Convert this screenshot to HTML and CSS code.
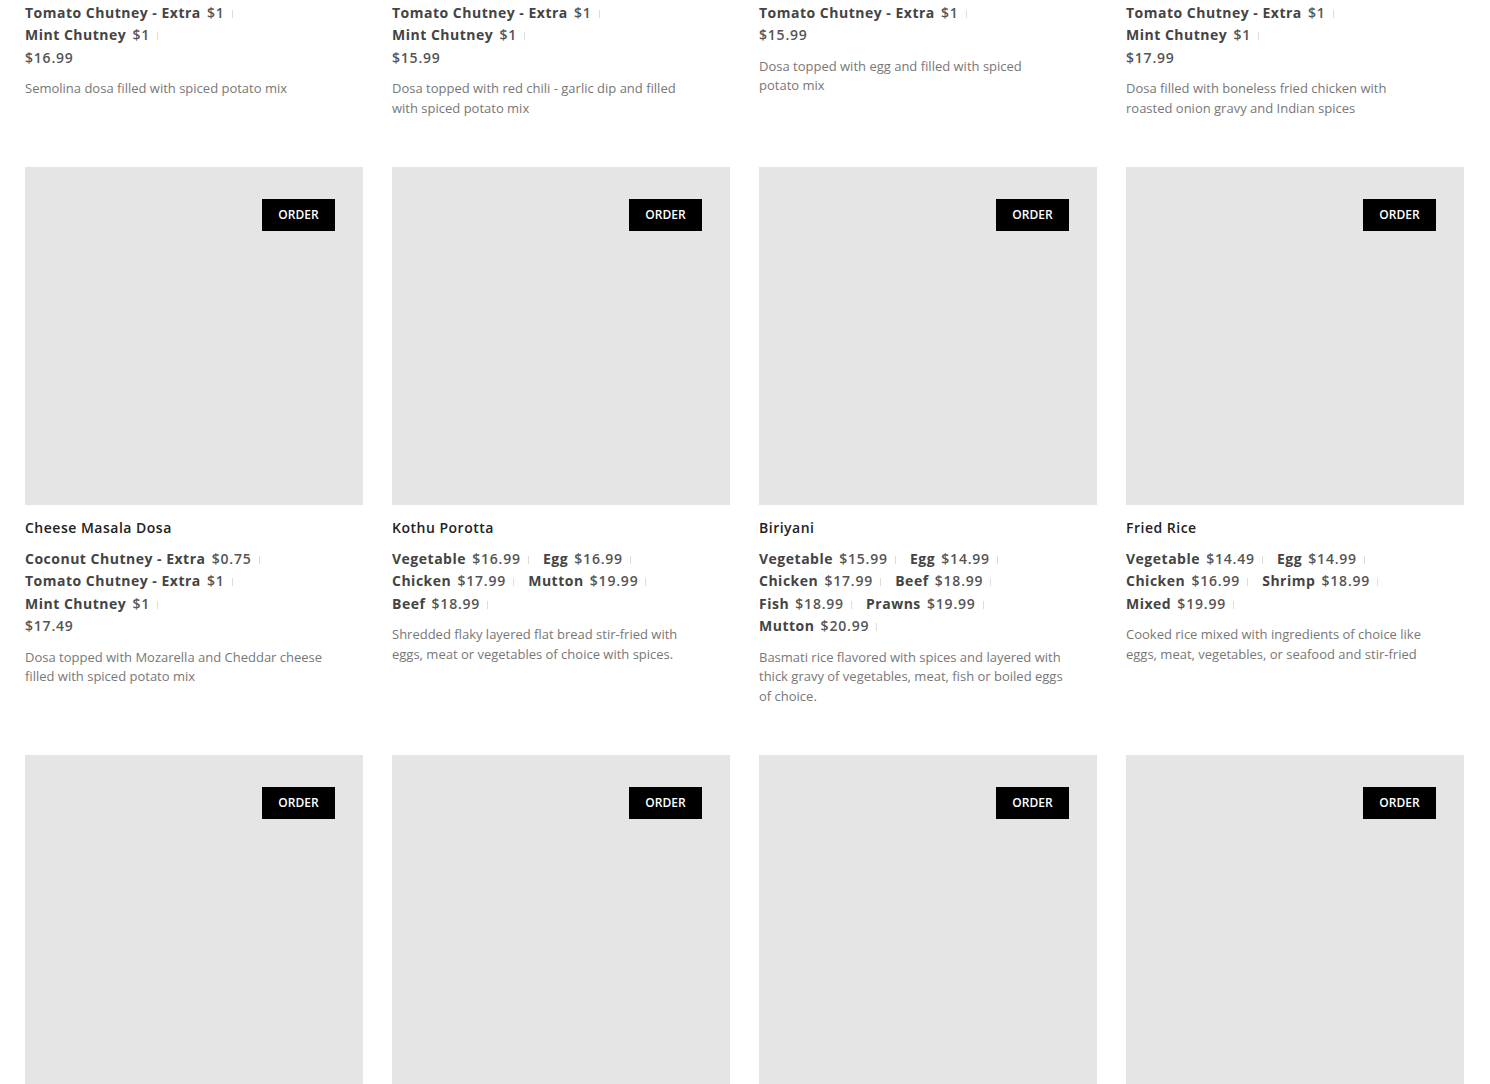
FILE: index.html
```html
<!DOCTYPE html>
<html lang="en">
<head>
<meta charset="utf-8">
<title>Menu</title>
<link rel="stylesheet" href="styles.css">
</head>
<body>
<main class="menu">
  <div class="grid">
    <article class="card">
      <div class="photo"><button class="order">ORDER</button></div>
      <h3 class="title">Rava Masala Dosa</h3>
      <div class="info">
        <div class="opts">
          <span class="opt"><b>Coconut Chutney - Extra</b> <span class="p">$0.75</span><i class="sep"></i></span>
          <span class="opt"><b>Tomato Chutney - Extra</b> <span class="p">$1</span><i class="sep"></i></span>
          <span class="opt"><b>Mint Chutney</b> <span class="p">$1</span><i class="sep"></i></span>
        </div>
        <div class="price">$16.99</div>
        <p class="desc">Semolina dosa filled with spiced potato mix</p>
      </div>
    </article>
    <article class="card">
      <div class="photo"><button class="order">ORDER</button></div>
      <h3 class="title">Mysore Masala Dosa</h3>
      <div class="info">
        <div class="opts">
          <span class="opt"><b>Coconut Chutney - Extra</b> <span class="p">$0.75</span><i class="sep"></i></span>
          <span class="opt"><b>Tomato Chutney - Extra</b> <span class="p">$1</span><i class="sep"></i></span>
          <span class="opt"><b>Mint Chutney</b> <span class="p">$1</span><i class="sep"></i></span>
        </div>
        <div class="price">$15.99</div>
        <p class="desc">Dosa topped with red chili - garlic dip and filled with spiced potato mix</p>
      </div>
    </article>
    <article class="card">
      <div class="photo"><button class="order">ORDER</button></div>
      <h3 class="title">Egg Masala Dosa</h3>
      <div class="info">
        <div class="opts">
          <span class="opt"><b>Coconut Chutney - Extra</b> <span class="p">$0.75</span><i class="sep"></i></span>
          <span class="opt"><b>Tomato Chutney - Extra</b> <span class="p">$1</span><i class="sep"></i></span>
        </div>
        <div class="price">$15.99</div>
        <p class="desc">Dosa topped with egg and filled with spiced potato mix</p>
      </div>
    </article>
    <article class="card">
      <div class="photo"><button class="order">ORDER</button></div>
      <h3 class="title">Chicken Masala Dosa</h3>
      <div class="info">
        <div class="opts">
          <span class="opt"><b>Coconut Chutney - Extra</b> <span class="p">$0.75</span><i class="sep"></i></span>
          <span class="opt"><b>Tomato Chutney - Extra</b> <span class="p">$1</span><i class="sep"></i></span>
          <span class="opt"><b>Mint Chutney</b> <span class="p">$1</span><i class="sep"></i></span>
        </div>
        <div class="price">$17.99</div>
        <p class="desc">Dosa filled with boneless fried chicken with roasted onion gravy and Indian spices</p>
      </div>
    </article>

    <article class="card">
      <div class="photo"><button class="order">ORDER</button></div>
      <h3 class="title">Cheese Masala Dosa</h3>
      <div class="info">
        <div class="opts">
          <span class="opt"><b>Coconut Chutney - Extra</b> <span class="p">$0.75</span><i class="sep"></i></span>
          <span class="opt"><b>Tomato Chutney - Extra</b> <span class="p">$1</span><i class="sep"></i></span>
          <span class="opt"><b>Mint Chutney</b> <span class="p">$1</span><i class="sep"></i></span>
        </div>
        <div class="price">$17.49</div>
        <p class="desc">Dosa topped with Mozarella and Cheddar cheese filled with spiced potato mix</p>
      </div>
    </article>
    <article class="card">
      <div class="photo"><button class="order">ORDER</button></div>
      <h3 class="title">Kothu Porotta</h3>
      <div class="info">
        <div class="opts">
          <span class="opt"><b>Vegetable</b> <span class="p">$16.99</span><i class="sep"></i></span>
          <span class="opt"><b>Egg</b> <span class="p">$16.99</span><i class="sep"></i></span>
          <span class="opt"><b>Chicken</b> <span class="p">$17.99</span><i class="sep"></i></span>
          <span class="opt"><b>Mutton</b> <span class="p">$19.99</span><i class="sep"></i></span>
          <span class="opt"><b>Beef</b> <span class="p">$18.99</span><i class="sep"></i></span>
        </div>
        <p class="desc">Shredded flaky layered flat bread stir-fried with eggs, meat or vegetables of choice with spices.</p>
      </div>
    </article>
    <article class="card">
      <div class="photo"><button class="order">ORDER</button></div>
      <h3 class="title">Biriyani</h3>
      <div class="info">
        <div class="opts">
          <span class="opt"><b>Vegetable</b> <span class="p">$15.99</span><i class="sep"></i></span>
          <span class="opt"><b>Egg</b> <span class="p">$14.99</span><i class="sep"></i></span>
          <span class="opt"><b>Chicken</b> <span class="p">$17.99</span><i class="sep"></i></span>
          <span class="opt"><b>Beef</b> <span class="p">$18.99</span><i class="sep"></i></span>
          <span class="opt"><b>Fish</b> <span class="p">$18.99</span><i class="sep"></i></span>
          <span class="opt"><b>Prawns</b> <span class="p">$19.99</span><i class="sep"></i></span>
          <span class="opt"><b>Mutton</b> <span class="p">$20.99</span><i class="sep"></i></span>
        </div>
        <p class="desc">Basmati rice flavored with spices and layered with thick gravy of vegetables, meat, fish or boiled eggs of choice.</p>
      </div>
    </article>
    <article class="card">
      <div class="photo"><button class="order">ORDER</button></div>
      <h3 class="title">Fried Rice</h3>
      <div class="info">
        <div class="opts">
          <span class="opt"><b>Vegetable</b> <span class="p">$14.49</span><i class="sep"></i></span>
          <span class="opt"><b>Egg</b> <span class="p">$14.99</span><i class="sep"></i></span>
          <span class="opt"><b>Chicken</b> <span class="p">$16.99</span><i class="sep"></i></span>
          <span class="opt"><b>Shrimp</b> <span class="p">$18.99</span><i class="sep"></i></span>
          <span class="opt"><b>Mixed</b> <span class="p">$19.99</span><i class="sep"></i></span>
        </div>
        <p class="desc">Cooked rice mixed with ingredients of choice like eggs, meat, vegetables, or seafood and stir-fried</p>
      </div>
    </article>

    <article class="card">
      <div class="photo"><button class="order">ORDER</button></div>
      <h3 class="title">Chicken Curry</h3>
    </article>
    <article class="card">
      <div class="photo"><button class="order">ORDER</button></div>
      <h3 class="title">Mutton Curry</h3>
    </article>
    <article class="card">
      <div class="photo"><button class="order">ORDER</button></div>
      <h3 class="title">Fish Curry</h3>
    </article>
    <article class="card">
      <div class="photo"><button class="order">ORDER</button></div>
      <h3 class="title">Vegetable Curry</h3>
    </article>
  </div>
</main>
</body>
</html>
```

FILE: styles.css
```css
html, body {
  margin: 0;
  padding: 0;
  background: #fff;
  overflow: hidden;
}
body {
  font-family: "Open Sans", "Noto Sans", sans-serif;
  color: #444;
}
.menu {
  padding: 0 26px 0 25px;
}
.grid {
  display: grid;
  grid-template-columns: repeat(4, 338px);
  column-gap: 29px;
  row-gap: 48.5px;
  align-items: start;
  margin-top: -402px;
}
.card {
  display: flex;
  flex-direction: column;
}
.photo {
  position: relative;
  width: 338px;
  height: 338px;
  background: #e5e5e5;
}
.order {
  position: absolute;
  top: 32px;
  right: 28px;
  width: 73px;
  height: 32px;
  border: 0;
  background: #000;
  color: #fff;
  font-family: "Open Sans", sans-serif;
  font-size: 12px;
  font-weight: 600;
  padding: 0 0 1px;
  cursor: pointer;
}
.title {
  margin: 12px 0 0;
  font-size: 14px;
  line-height: 22px;
  font-weight: 600;
  letter-spacing: 0.5px;
  color: #222;
}
.info {
  max-width: 304px;
}
.opts {
  margin-top: 9px;
  font-size: 14px;
  line-height: 22.5px;
  letter-spacing: 0.5px;
}
.opt {
  display: inline-block;
  white-space: nowrap;
  margin-right: 10px;
}
.opt b {
  font-weight: 700;
  color: #444;
}
.p {
  font-weight: 600;
  color: #555;
  margin-left: 2px;
  letter-spacing: 0.8px;
}
.sep {
  display: inline-block;
  width: 1px;
  height: 8px;
  margin-left: 7px;
  background: #ddd;
  vertical-align: 0px;
}
.price {
  font-size: 14px;
  line-height: 22.5px;
  letter-spacing: 0.8px;
  font-weight: 600;
  color: #555;
}
.desc {
  margin: 10px 0 0;
  font-size: 13px;
  line-height: 19.5px;
  color: #777;
}
```
